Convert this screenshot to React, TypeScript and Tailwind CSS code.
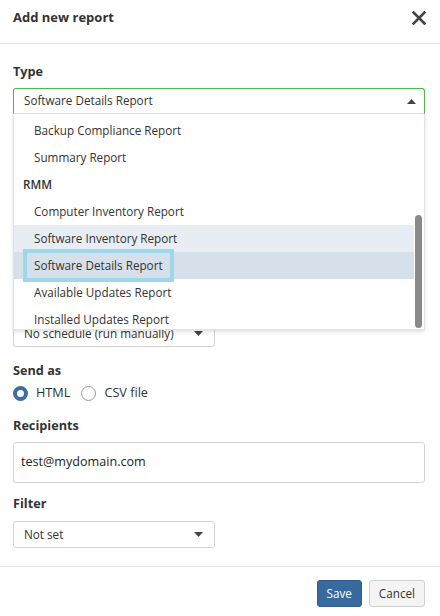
import React from "react";

type Row = { label: string; kind: "item" | "group"; state?: "hover" | "selected" };

const rows: Row[] = [
  { label: "Backup Compliance Report", kind: "item" },
  { label: "Summary Report", kind: "item" },
  { label: "RMM", kind: "group" },
  { label: "Computer Inventory Report", kind: "item" },
  { label: "Software Inventory Report", kind: "item", state: "hover" },
  { label: "Software Details Report", kind: "item", state: "selected" },
  { label: "Available Updates Report", kind: "item" },
  { label: "Installed Updates Report", kind: "item" },
];

function Caret({ up }: { up?: boolean }) {
  return (
    <svg width="9" height="5" viewBox="0 0 9 5" className="shrink-0">
      {up ? (
        <path d="M0 5 L4.5 0 L9 5 Z" fill="#444" />
      ) : (
        <path d="M0 0 L4.5 5 L9 0 Z" fill="#444" />
      )}
    </svg>
  );
}

function Label({ children, mb }: { children: React.ReactNode; mb?: string }) {
  return (
    <div className={"text-[12.7px] leading-[18px] font-bold text-[#333] " + (mb ?? "mb-2")}>
      {children}
    </div>
  );
}

function Select({ value, className }: { value: string; className?: string }) {
  return (
    <div
      className={
        "w-[202px] h-[27px] flex items-center justify-between pl-[10px] pr-[11px] border border-[#d4d4d4] rounded-[3px] bg-white text-[11.7px] text-[#333] " +
        (className ?? "")
      }
    >
      <span>{value}</span>
      <Caret />
    </div>
  );
}

function Dropdown() {
  return (
    <div className="absolute left-0 right-0 top-full h-[216px] bg-white border-x border-b border-[#e2e2e2] shadow-[0_2px_4px_rgba(0,0,0,0.12)] flex overflow-hidden z-10">
      <div className="flex-1 pt-[3px]">
        {rows.map((r) =>
          r.kind === "group" ? (
            <div
              key={r.label}
              className="h-[27px] flex items-center pl-[9px] text-[11.7px] font-semibold text-[#333]"
            >
              {r.label}
            </div>
          ) : (
            <div
              key={r.label}
              className={
                "h-[27px] flex items-center pl-[20px] text-[11.7px] text-[#333] " +
                (r.state === "hover"
                  ? "bg-[#e8edf4]"
                  : r.state === "selected"
                  ? "bg-[#d6e0ea]"
                  : "")
              }
            >
              {r.state === "selected" ? (
                <span className="-ml-[11px] h-[33px] flex items-center px-[7px] border-4 border-[#9dd8ea]">
                  {r.label}
                </span>
              ) : (
                r.label
              )}
            </div>
          )
        )}
      </div>
      <div className="w-[10px] pl-[1px] pr-[2px]">
        <div className="mt-[101px] h-[113px] w-[7px] rounded-full bg-[#8a8a8a]" />
      </div>
    </div>
  );
}

export default function App() {
  return (
    <div
      className="w-[440px] h-[616px] bg-white text-[#333] overflow-hidden"
      style={{ fontFamily: '"Open Sans", sans-serif' }}
    >
      <div className="h-[44px] border-b border-[#e4e4e4] flex items-center justify-between pl-[13px] pr-[14px]">
        <h1 className="text-[13px] font-bold text-[#333] leading-none -mt-[8px]">
          Add new report
        </h1>
        <svg width="14" height="14" viewBox="0 0 14 14" className="-mt-[8px]">
          <path
            d="M1.5 1.5 L12.5 12.5 M12.5 1.5 L1.5 12.5"
            stroke="#444"
            strokeWidth="2.6"
            strokeLinecap="square"
          />
        </svg>
      </div>

      <div className="pl-[13px] pr-[15px] pt-[18px] pb-[18px]">
        <Label>Type</Label>
        <div className="relative">
          <div className="h-[26px] flex items-center justify-between pl-[10px] pr-[8px] border border-[#4cb84f] border-b-[#e2e2e2] rounded-t-[3px] bg-white text-[11.7px] text-[#333]">
            <span>Software Details Report</span>
            <Caret up />
          </div>
          <Dropdown />
        </div>

        {/* the fields above Schedule sit under the open list */}
        <Select value="No schedule (run manually)" className="mt-[206px]" />

        <div className="mt-[14px]">
          <Label mb="mb-[7px]">Send as</Label>
          <div className="flex items-center h-[14px] text-[12.7px] text-[#333]">
            <span className="w-[15px] h-[15px] rounded-full border-[4px] border-[#3a6ea5] bg-white" />
            <span className="ml-[8px]">HTML</span>
            <span className="ml-[11px] w-[15px] h-[15px] rounded-full border border-[#9a9a9a] bg-white" />
            <span className="ml-[8px]">CSV file</span>
          </div>
        </div>

        <div className="mt-[16px]">
          <Label>Recipients</Label>
          <div className="h-[41px] flex items-center px-[7px] border border-[#d4d4d4] rounded-[3px] text-[12.6px] text-[#222]">
            test@mydomain.com
          </div>
        </div>

        <div className="mt-[11px]">
          <Label mb="mb-[9px]">Filter</Label>
          <Select value="Not set" />
        </div>
      </div>

      <div className="border-t border-[#e4e4e4] pt-[13px] pr-[15px] flex justify-end gap-[7px]">
        <button className="h-[27px] px-[9px] rounded-[3px] bg-[#386aa0] border border-[#2f5d8e] text-white text-[11.7px]">
          Save
        </button>
        <button className="h-[27px] px-[9px] rounded-[3px] bg-[#f4f4f4] border border-[#d0d0d0] text-[#333] text-[11.7px]">
          Cancel
        </button>
      </div>
    </div>
  );
}
